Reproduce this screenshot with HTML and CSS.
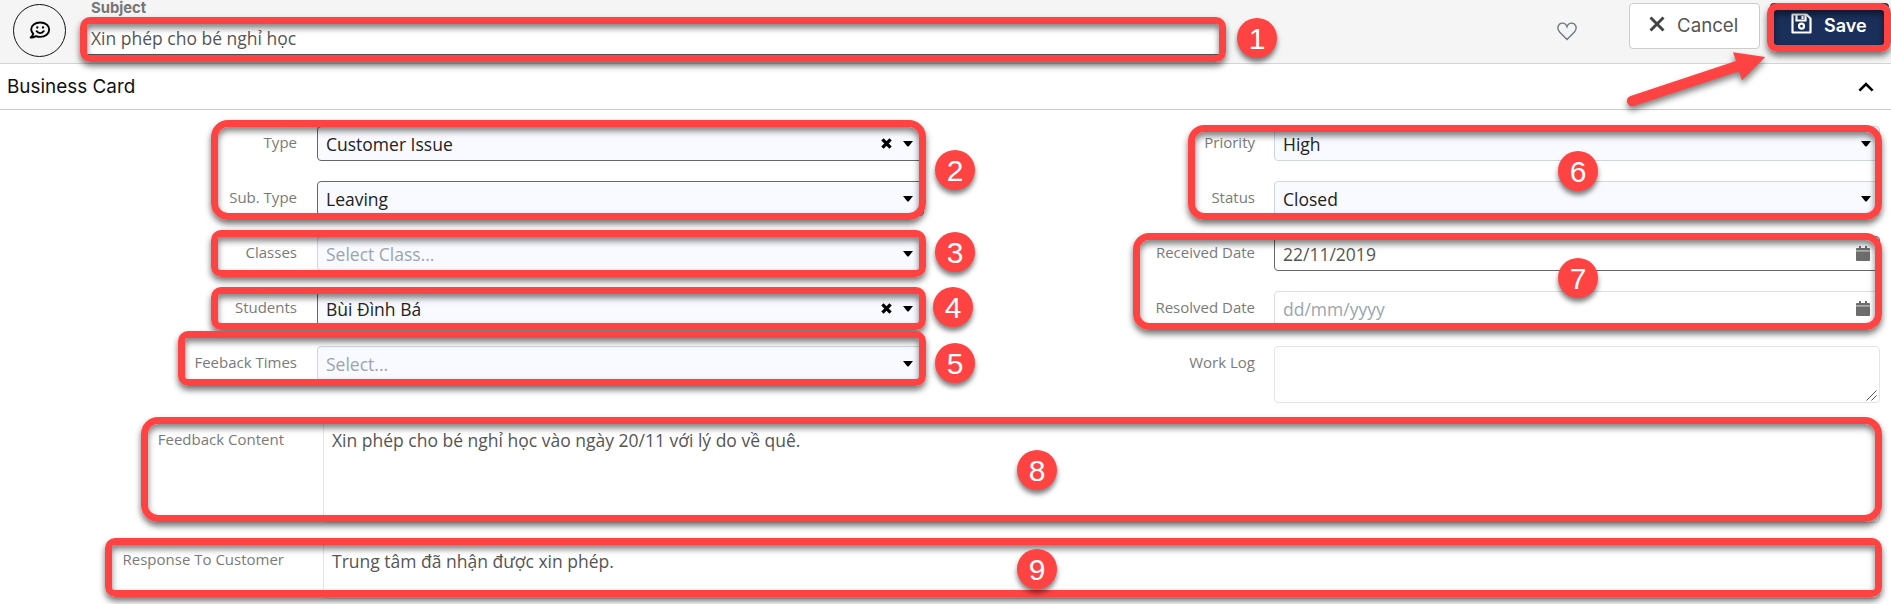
FILE: index.html
```html
<!DOCTYPE html>
<html lang="vi">
<head>
<meta charset="utf-8">
<title>Business Card</title>
<link rel="stylesheet" href="styles.css">
</head>
<body>
<svg class="defs" width="0" height="0">
  <symbol id="caret" viewBox="0 0 10 6"><path d="M0 0H10L6 5Q5 6 4 5Z"/></symbol>
  <symbol id="clear" viewBox="0 0 10 10"><path d="M1.3 1.3L8.7 8.7M8.7 1.3L1.3 8.7" stroke="#000" stroke-width="3" fill="none"/></symbol>
  <symbol id="calendar" viewBox="0 0 14 16"><path d="M3 0h2v2h4V0h2v2h2q1 0 1 1v1.2H0V3q0-1 1-1h2zM0 5.2h14V14q0 1-1 1H1q-1 0-1-1z"/><path d="M0 4h14v1.4H0z" fill="#aaa"/></symbol>
</svg>
<div class="page">
  <header class="topbar">
    <div class="avatar">
      <svg width="22" height="19" viewBox="0 0 22 19" fill="none" stroke="#000" stroke-width="1.9" stroke-linecap="round" stroke-linejoin="round">
        <path d="M11.2 1.5C6 1.5 2.2 4.4 2.2 8.3c0 1.8.8 3.4 2 4.5-.3 1.5-1.3 2.8-2.5 3.8 2 0 3.8-.6 5.1-1.5 1.3.5 2.8.8 4.400.8 5.200 0 9-3.200 9-7.300S16.400 1.500 11.200 1.500Z"/>
        <path d="M7.600 10.200Q11.200 14 14.800 10.200"/>
        <path d="M8.300 6.500v.1M14 6.500v.1" stroke-width="2.300"/>
      </svg>
    </div>
    <div class="subject">
      <label class="subject-label">Subject</label>
      <div class="subject-input">Xin phép cho bé nghỉ học</div>
    </div>
    <svg class="heart" width="20" height="19" viewBox="0 0 20 19" fill="none" stroke="#6c7a86" stroke-width="1.400"><path d="M10 17.500 2.600 10C-.6 6.500 1 1.300 5.200 1.100 7.500 1 9.200 2.500 10 4.700 10.800 2.500 12.500 1 14.800 1.100 19 1.300 20.600 6.500 17.400 10Z"/></svg>
    <div class="btn cancel">
      <svg width="16" height="16" viewBox="0 0 16 16" fill="none" stroke="#444" stroke-width="2.900"><path d="M1.500 1.500 14.500 14.500M14.500 1.500 1.500 14.500"/></svg>
      <span>Cancel</span>
    </div>
    <div class="btn save">
      <svg width="21" height="21" viewBox="0 0 21 21" fill="none" stroke="#fff" stroke-width="2.200"><path d="M1.500 1.500H15.500L19.500 5.500V19.500H1.500Z" stroke-linejoin="round"/><path d="M5.500 2V7.500H14.500V2M11.500 3v3"/><circle cx="10.500" cy="13.200" r="2.500"/></svg>
      <span>Save</span>
    </div>
  </header>

  <div class="section">
    <h2 class="section-title">Business Card</h2>
    <svg class="chevron" width="16" height="10" viewBox="0 0 16 10" fill="none" stroke="#000" stroke-width="2.600"><path d="M1.400 8.600 8 2 14.600 8.600"/></svg>
  </div>

  <main class="form">
    <div class="columns">
      <div class="column left">
        <div class="row"><label class="label">Type</label><div class="field select dark"><span>Customer Issue</span><svg class="clear"><use href="#clear"/></svg><svg class="caret"><use href="#caret"/></svg></div></div>
        <div class="row"><label class="label">Sub. Type</label><div class="field select dark"><span>Leaving</span><svg class="caret"><use href="#caret"/></svg></div></div>
        <div class="row"><label class="label">Classes</label><div class="field select hint"><span>Select Class...</span><svg class="caret"><use href="#caret"/></svg></div></div>
        <div class="row"><label class="label">Students</label><div class="field select dark"><span>Bùi Đình Bá</span><svg class="clear"><use href="#clear"/></svg><svg class="caret"><use href="#caret"/></svg></div></div>
        <div class="row"><label class="label">Feeback Times</label><div class="field select hint"><span>Select...</span><svg class="caret"><use href="#caret"/></svg></div></div>
      </div>
      <div class="column right">
        <div class="row"><label class="label">Priority</label><div class="field select"><span>High</span><svg class="caret"><use href="#caret"/></svg></div></div>
        <div class="row"><label class="label">Status</label><div class="field select"><span>Closed</span><svg class="caret"><use href="#caret"/></svg></div></div>
        <div class="row"><label class="label">Received Date</label><div class="field date dark"><span>22/11/2019</span><svg class="calendar"><use href="#calendar"/></svg></div></div>
        <div class="row"><label class="label">Resolved Date</label><div class="field date hint"><span>dd/mm/yyyy</span><svg class="calendar"><use href="#calendar"/></svg></div></div>
        <div class="row"><label class="label">Work Log</label><div class="field area"><svg class="grip" width="11" height="11" viewBox="0 0 11 11" stroke="#555" stroke-width="1"><path d="M.5 10.500 10.500.5M5.500 10.500 10.500 5.500"/></svg></div></div>
      </div>
    </div>
    <div class="wide content"><label class="label">Feedback Content</label><div class="field text">Xin phép cho bé nghỉ học vào ngày 20/11 với lý do về quê.</div></div>
    <div class="wide response"><label class="label">Response To Customer</label><div class="field text">Trung tâm đã nhận được xin phép.</div></div>
  </main>

  <div class="mark m-subject"></div>
  <div class="mark m-save"></div>
  <div class="mark m-type"></div>
  <div class="mark m-classes"></div>
  <div class="mark m-students"></div>
  <div class="mark m-times"></div>
  <div class="mark m-status"></div>
  <div class="mark m-dates"></div>
  <div class="mark m-content"></div>
  <div class="mark m-response"></div>
  <div class="badge b1">1</div>
  <div class="badge b2">2</div>
  <div class="badge b3">3</div>
  <div class="badge b4">4</div>
  <div class="badge b5">5</div>
  <div class="badge b6">6</div>
  <div class="badge b7">7</div>
  <div class="badge b8">8</div>
  <div class="badge b9">9</div>
  <svg class="arrow" width="150" height="66" viewBox="0 0 150 66" fill="#ff4343"><path d="M10.600 50.900 L116 16 L113 7.300 L145.300 12 L122 35.300 L119 26.200 L13.800 61.100 A5.300 5.300 0 0 1 10.600 50.900 Z"/></svg>
</div>
</body>
</html>
```
FILE: styles.css
```css
* { box-sizing: border-box; }
body { margin: 0; background: #fff; font-family: "Open Sans", sans-serif; }
.defs { position: absolute; }
.page { position: relative; width: 1891px; height: 604px; overflow: hidden; }

.topbar { display: flex; align-items: flex-start; height: 64px; padding-left: 13px; background: #f5f5f5; border-bottom: 1px solid #d4d4d4; }
.avatar { display: flex; align-items: center; justify-content: center; width: 53px; height: 53px; margin-top: 4px; border: 1px solid #111; border-radius: 50%; }
.subject { width: 1137px; margin-left: 18px; }
.subject-label { display: block; height: 20px; padding-left: 7px; font: 700 14.800px/17px Inter, sans-serif; color: #757575; }
.subject-input { height: 35px; padding-left: 7px; border-bottom: 1px solid #555; background: #fff; font-size: 17.500px; line-height: 37px; color: #555; }
.heart { margin: 22px 0 0 336px; }
.btn { display: flex; border-radius: 4px; font-family: Inter, sans-serif; font-size: 18px; line-height: 22px; }
.cancel { gap: 12px; width: 131px; height: 46px; margin: 3px 0 0 52px; padding: 11px 0 0 19px; border: 1px solid #ccc; background: #fff; color: #555; font-size: 18.700px; }
.cancel svg { margin-top: 1px; }
.save { gap: 12px; width: 119px; height: 46px; margin: 3px 0 0 10px; padding: 11px 0 0 21px; background: #1a2f5a; color: #fff; font-weight: 600; }
.save svg { margin-top: -1px; }
.save span { padding-top: 1px; }

.section { display: flex; align-items: center; justify-content: space-between; height: 46px; padding: 0 17px 0 7px; border-bottom: 1px solid #ccc; }
.section-title { margin: 0; font: 400 18.900px/24px Inter, sans-serif; color: #111; }

.form { padding-top: 16px; }
.columns { display: flex; justify-content: space-between; padding-right: 11px; height: 295px; }
.column { display: flex; flex-direction: column; gap: 20px; }
.row { display: flex; justify-content: flex-end; }
.left { width: 924px; }
.right { width: 900px; }
.label { padding-top: 6px; font-size: 15px; line-height: 20px; color: #7a7a7a; text-align: right; white-space: nowrap; }
.field { display: flex; align-items: center; width: 607px; height: 35px; margin-left: 20px; padding: 0 8px; border: 1px solid #cfd7df; border-radius: 4px; font-size: 17.500px; color: #222; white-space: nowrap; }
.field span { flex: 1; }
.right .field { width: 606px; margin-left: 19px; }
.select { background: #f9faff; }
.right .select { padding-right: 8px; }
.left .select { padding-right: 10px; }
.dark { border-color: #666; }
.date { color: #555; padding-right: 9px; border-color: #ddd; }
.date.dark { border-color: #666; }
.field.hint { color: #99a5af; }
.caret { width: 10px; height: 6px; }
.clear { width: 11px; height: 11px; margin-right: 11px; }
.calendar { width: 14px; height: 16px; fill: #6c6c6c; }
.area { height: 57px; align-items: flex-end; justify-content: flex-end; padding: 0 2px 1px; border-color: #e4e4e4; }
.wide { display: flex; justify-content: flex-end; padding-right: 11px; }
.wide .label { padding-top: 8px; }
.wide .field { align-items: flex-start; width: 1557px; margin-left: 39px; padding-top: 5px; border-color: #e4e4e4; line-height: 26px; color: #555; }
.content { height: 121px; }
.content .field { height: 102px; }
.response .label { padding-top: 7px; }
.response .field { height: 57px; }

.mark { position: absolute; border: 7px solid #ff4343; border-radius: 10px; box-shadow: 0 4px 6px rgba(0,0,0,.55), inset 0 4px 6px rgba(0,0,0,.5); }
.m-subject { left: 80px; top: 17px; width: 1146px; height: 45px; }
.m-save { left: 1767px; top: 3px; width: 124px; height: 49px; }
.m-type { left: 211px; top: 120px; width: 715px; height: 100px; border-radius: 17px; }
.m-classes { left: 211px; top: 230px; width: 715px; height: 47px; }
.m-students { left: 211px; top: 287px; width: 715px; height: 43px; }
.m-times { left: 178px; top: 331px; width: 748px; height: 55px; }
.m-status { left: 1188px; top: 125px; width: 694px; height: 95px; border-radius: 16px; }
.m-dates { left: 1133px; top: 233px; width: 749px; height: 97px; border-radius: 16px; }
.m-content { left: 141px; top: 417px; width: 1741px; height: 105px; border-radius: 17px; }
.m-response { left: 105px; top: 538px; width: 1777px; height: 59px; }
.badge { position: absolute; width: 40px; height: 40px; border-radius: 50%; background: #ff4343; box-shadow: 0 4px 5px rgba(0,0,0,.5); color: #fff; font: 30px/41px "Liberation Sans", Arial, sans-serif; text-align: center; }
.b1 { left: 1237px; top: 18px; }
.b2 { left: 935px; top: 150px; }
.b3 { left: 935px; top: 232px; }
.b4 { left: 933px; top: 287px; }
.b5 { left: 935px; top: 343px; }
.b6 { left: 1558px; top: 151px; }
.b7 { left: 1558px; top: 258px; }
.b8 { left: 1017px; top: 450px; }
.b9 { left: 1017px; top: 549px; }
.arrow { position: absolute; left: 1620px; top: 45px; overflow: visible; filter: drop-shadow(0 4px 3px rgba(0,0,0,.5)); }
```
